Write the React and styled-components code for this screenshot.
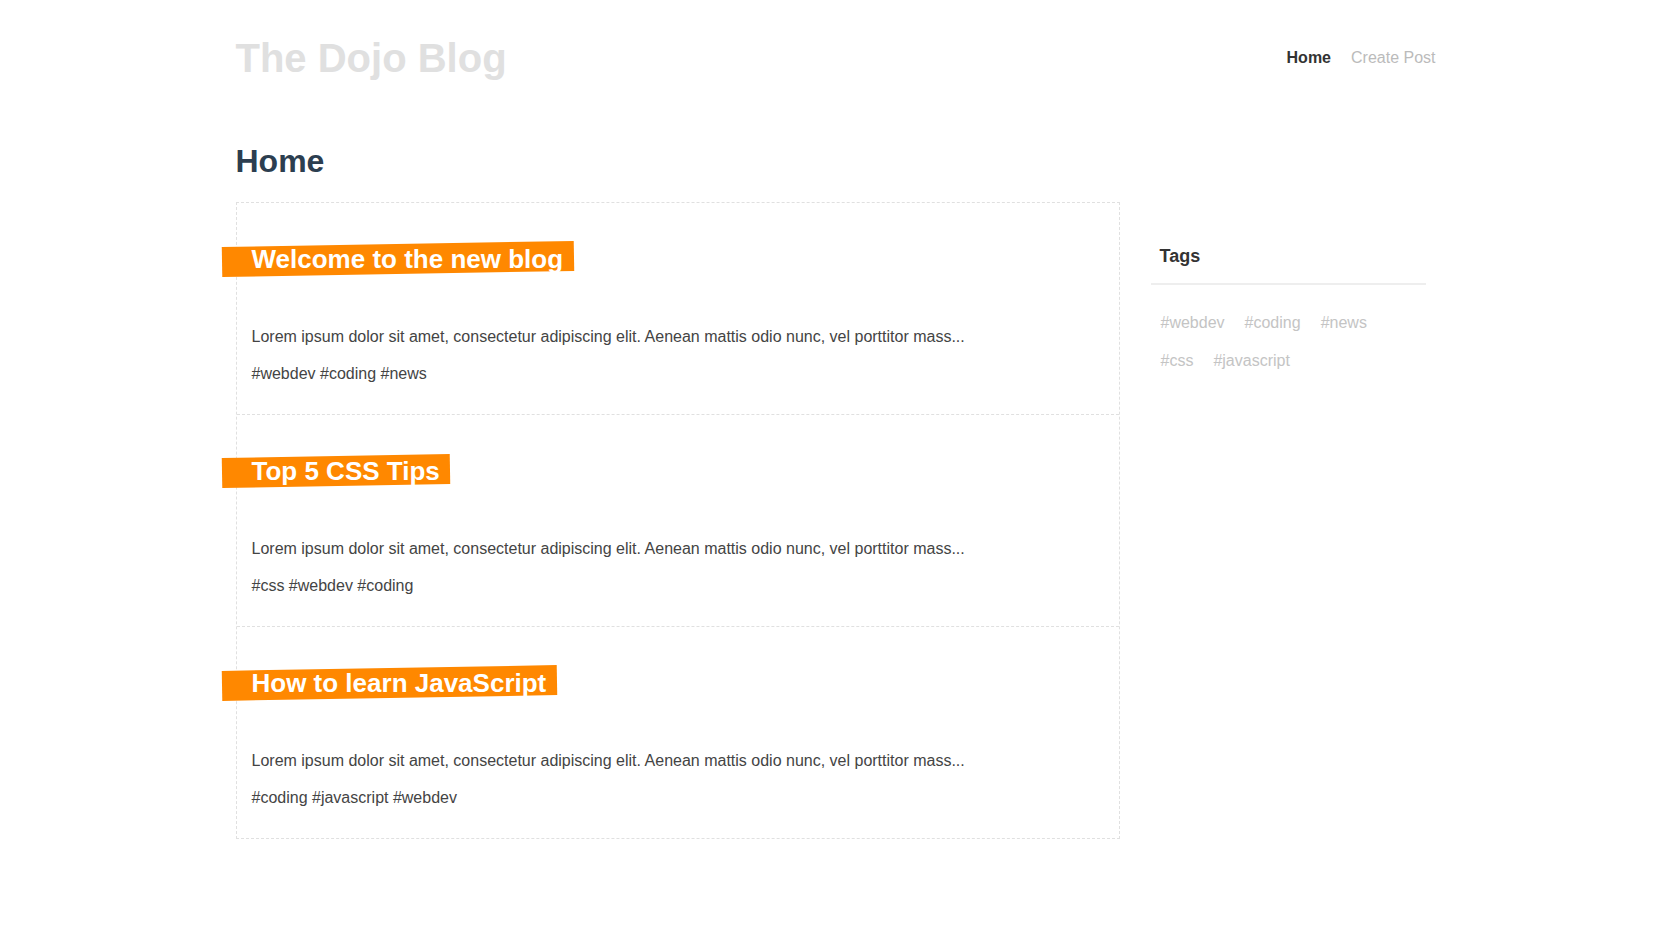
import React from 'react'
import styled, { createGlobalStyle } from 'styled-components'

const GlobalStyle = createGlobalStyle`
  * { box-sizing: border-box; }
  body {
    margin: 0;
    background: #fff;
    font-family: 'Liberation Sans', Arial, sans-serif;
    color: #333;
  }
`

const posts = [
  { id: 1, title: 'Welcome to the new blog', tags: ['webdev', 'coding', 'news'] },
  { id: 2, title: 'Top 5 CSS Tips', tags: ['css', 'webdev', 'coding'] },
  { id: 3, title: 'How to learn JavaScript', tags: ['coding', 'javascript', 'webdev'] },
]

const allTags = ['webdev', 'coding', 'news', 'css', 'javascript']

const lorem =
  'Lorem ipsum dolor sit amet, consectetur adipiscing elit. Aenean mattis odio nunc, vel porttitor mass...'

const Page = styled.div`
  max-width: 1200px;
  margin: 0 auto;
`

const Header = styled.header`
  display: flex;
  justify-content: space-between;
  align-items: center;
  padding-top: 35px;
`

const Logo = styled.h1`
  margin: 0;
  font-size: 40px;
  line-height: 46px;
  font-weight: 700;
  color: #e0e0e0;
`

const Nav = styled.nav`
  display: flex;
  gap: 20px;
  font-size: 16px;
`

const NavLink = styled.a`
  text-decoration: none;
  color: ${(p) => (p.active ? '#333' : '#bbb')};
  font-weight: ${(p) => (p.active ? 700 : 400)};
  cursor: pointer;
`

const PageTitle = styled.h2`
  margin: 62px 0 22px;
  font-size: 32px;
  font-weight: 700;
  color: #2c3e50;
`

const Layout = styled.div`
  display: grid;
  grid-template-columns: 884px 275px;
  column-gap: 31px;
  align-items: start;
`

const PostList = styled.div`
  border: 1px dashed #e0e0e0;
`

const Card = styled.article`
  padding: 16px 15px;
  border-bottom: 1px dashed #e0e0e0;

  &:last-child {
    border-bottom: none;
  }
`

const PostTitle = styled.h2`
  position: relative;
  z-index: 0;
  display: inline-block;
  margin: 25px 0 0;
  padding-right: 10px;
  font-size: 26px;
  line-height: 30px;
  font-weight: 700;
  color: #fff;

  &::before {
    content: '';
    position: absolute;
    z-index: -1;
    top: 0;
    bottom: 0;
    left: -30px;
    right: 0;
    background: #ff8800;
    transform: rotate(-1deg);
  }
`

const Excerpt = styled.p`
  margin: 54px 0 19px;
  font-size: 16px;
  color: #444;
`

const PostTags = styled.p`
  margin: 0 0 15px;
  font-size: 16px;
  color: #444;
`

const Sidebar = styled.aside`
  padding-top: 44px;
`

const SideTitle = styled.h3`
  margin: 0;
  padding: 0 9px 16px;
  font-size: 18px;
  font-weight: 700;
  color: #333;
  border-bottom: 2px solid #eee;
`

const TagCloud = styled.div`
  display: flex;
  flex-wrap: wrap;
  padding-top: 19px;
`

const Tag = styled.span`
  padding: 10px;
  font-size: 16px;
  color: #c4c4c4;
`

const App = () => {
  return (
    <>
      <GlobalStyle />
      <Page>
        <Header>
          <Logo>The Dojo Blog</Logo>
          <Nav>
            <NavLink active>Home</NavLink>
            <NavLink>Create Post</NavLink>
          </Nav>
        </Header>
        <PageTitle>Home</PageTitle>
        <Layout>
          <PostList>
            {posts.map((post) => (
              <Card key={post.id}>
                <PostTitle>{post.title}</PostTitle>
                <Excerpt>{lorem}</Excerpt>
                <PostTags>{post.tags.map((t) => '#' + t).join(' ')}</PostTags>
              </Card>
            ))}
          </PostList>
          <Sidebar>
            <SideTitle>Tags</SideTitle>
            <TagCloud>
              {allTags.map((t) => (
                <Tag key={t}>#{t}</Tag>
              ))}
            </TagCloud>
          </Sidebar>
        </Layout>
      </Page>
    </>
  )
}

export default App
